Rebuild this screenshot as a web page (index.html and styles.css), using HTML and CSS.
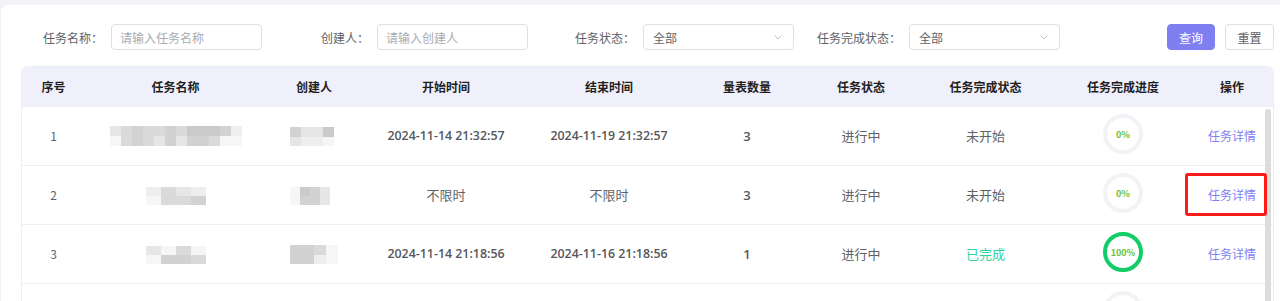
FILE: index.html
```html
<!DOCTYPE html>
<html lang="zh-CN">
<head>
<meta charset="utf-8">
<title>任务列表</title>
<link rel="stylesheet" href="styles.css">
</head>
<body>
<div class="page">
  <div class="card">
    <form class="filters">
      <div class="fitem first">
        <label class="flabel">任务名称：</label>
        <div class="finput"><span class="ph">请输入任务名称</span></div>
      </div>
      <div class="fitem">
        <label class="flabel">创建人：</label>
        <div class="finput"><span class="ph">请输入创建人</span></div>
      </div>
      <div class="fitem">
        <label class="flabel">任务状态：</label>
        <div class="finput select"><span class="val">全部</span>
          <svg class="chev" viewBox="0 0 8 5" width="8" height="5"><path d="M0.5 0.5 L4 4 L7.5 0.5" fill="none" stroke="#c0c4cc" stroke-width="1"/></svg>
        </div>
      </div>
      <div class="fitem">
        <label class="flabel">任务完成状态：</label>
        <div class="finput select"><span class="val">全部</span>
          <svg class="chev" viewBox="0 0 8 5" width="8" height="5"><path d="M0.5 0.5 L4 4 L7.5 0.5" fill="none" stroke="#c0c4cc" stroke-width="1"/></svg>
        </div>
      </div>
      <div class="btns">
        <button type="button" class="btn primary">查询</button>
        <button type="button" class="btn">重置</button>
      </div>
    </form>

    <div class="table-wrap">
      <table class="tbl">
        <colgroup>
          <col class="c1"><col class="c2"><col class="c3"><col class="c4"><col class="c5">
          <col class="c6"><col class="c7"><col class="c8"><col class="c9"><col class="c10">
        </colgroup>
        <thead>
          <tr>
            <th>序号</th><th>任务名称</th><th>创建人</th><th>开始时间</th><th>结束时间</th>
            <th>量表数量</th><th>任务状态</th><th>任务完成状态</th><th>任务完成进度</th><th>操作</th>
          </tr>
        </thead>
        <tbody>
          <tr>
            <td class="idx">1</td>
            <td><div class="mosaic m-name1"><i class="a"></i><i class="b"></i><i class="c"></i><i class="b"></i><i class="b"></i><i class="c"></i><i class="b"></i><i class="d"></i><i class="d"></i><i class="d"></i><i class="c"></i><i class="e"></i><i class="f"></i><i class="b"></i><i class="c"></i><i class="b"></i><i class="a"></i><i class="c"></i><i class="a"></i><i class="c"></i><i class="c"></i><i class="b"></i><i class="f"></i><i class="f"></i></div></td>
            <td><div class="mosaic m-user"><i class="c"></i><i class="a"></i><i class="a"></i><i class="d"></i><i class="a"></i><i class="e"></i><i class="e"></i><i class="f"></i></div></td>
            <td class="date">2024-11-14 21:32:57</td>
            <td class="date">2024-11-19 21:32:57</td>
            <td class="num">3</td>
            <td>进行中</td>
            <td>未开始</td>
            <td><div class="ring"><svg viewBox="0 0 40 40" width="40" height="40"><circle cx="20" cy="20" r="18" fill="none" stroke="#f2f3f7" stroke-width="4"/></svg><span class="pct">0%</span></div></td>
            <td><a class="link">任务详情</a></td>
          </tr>
          <tr>
            <td class="idx">2</td>
            <td><div class="mosaic m-name2"><i class="e"></i><i class="b"></i><i class="a"></i><i class="e"></i><i class="f"></i><i class="b"></i><i class="b"></i><i class="c"></i></div></td>
            <td><div class="mosaic m-user2"><i class="f"></i><i class="d"></i><i class="c"></i><i class="a"></i><i class="f"></i><i class="c"></i><i class="c"></i><i class="a"></i></div></td>
            <td>不限时</td>
            <td>不限时</td>
            <td class="num">3</td>
            <td>进行中</td>
            <td>未开始</td>
            <td><div class="ring"><svg viewBox="0 0 40 40" width="40" height="40"><circle cx="20" cy="20" r="18" fill="none" stroke="#f2f3f7" stroke-width="4"/></svg><span class="pct">0%</span></div></td>
            <td><a class="link">任务详情</a></td>
          </tr>
          <tr>
            <td class="idx">3</td>
            <td><div class="mosaic m-name2"><i class="a"></i><i class="f"></i><i class="b"></i><i class="f"></i><i class="f"></i><i class="c"></i><i class="c"></i><i class="b"></i></div></td>
            <td><div class="mosaic m-user3"><i class="c"></i><i class="c"></i><i class="b"></i><i class="f"></i><i class="c"></i><i class="c"></i><i class="e"></i><i class="f"></i></div></td>
            <td class="date">2024-11-14 21:18:56</td>
            <td class="date">2024-11-16 21:18:56</td>
            <td class="num">1</td>
            <td>进行中</td>
            <td class="done">已完成</td>
            <td><div class="ring"><svg viewBox="0 0 40 40" width="40" height="40"><circle cx="20" cy="20" r="18" fill="none" stroke="#13ce66" stroke-width="4"/></svg><span class="pct">100%</span></div></td>
            <td><a class="link">任务详情</a></td>
          </tr>
          <tr>
            <td></td><td></td><td></td><td></td><td></td><td></td><td></td><td></td>
            <td><div class="ring"><svg viewBox="0 0 40 40" width="40" height="40"><circle cx="20" cy="20" r="18" fill="none" stroke="#f2f3f7" stroke-width="4"/></svg></div></td>
            <td></td>
          </tr>
        </tbody>
      </table>
      <div class="scroll-thumb"></div>
      <div class="highlight"></div>
    </div>
  </div>
</div>
</body>
</html>
```

FILE: styles.css
```css
* { box-sizing: border-box; }

html, body {
  margin: 0;
  height: 301px;
  overflow: hidden;
}

body {
  background: #f2f3f7;
  font-family: "Noto Sans CJK SC", "Noto Sans", sans-serif;
  color: #606266;
}

.page {
  padding: 5px 0 0 1px;
}

.card {
  background: #fff;
  border-radius: 6px 0 0 0;
  padding: 19px 6px 0 20px;
  height: 296px;
}

/* filters */
.filters {
  display: flex;
  align-items: center;
  height: 26px;
  margin: 0;
}

.fitem {
  display: flex;
  align-items: center;
  justify-content: flex-end;
  width: 266px;
  flex: none;
}

.fitem.first {
  width: 241px;
}

.flabel {
  font-size: 12px;
  color: #606266;
  padding-right: 8px;
  white-space: nowrap;
}

.finput {
  width: 151px;
  height: 26px;
  border: 1px solid #dcdfe6;
  border-radius: 4px;
  display: flex;
  align-items: center;
  padding: 0 8px;
  font-size: 12px;
  flex: none;
}

.finput .ph {
  color: #a8abb2;
}

.finput.select {
  justify-content: space-between;
  padding: 0 11px 0 9px;
}

.finput .val {
  color: #606266;
}

.chev {
  display: block;
}

.btns {
  margin-left: auto;
  display: flex;
  gap: 10px;
}

.btn {
  height: 26px;
  width: 49px;
  border: 1px solid #dcdfe6;
  border-radius: 4px;
  background: #fff;
  color: #606266;
  font-family: inherit;
  font-size: 12px;
  padding: 0;
}

.btn.primary {
  width: 48px;
  background: #7f7ff2;
  border-color: #7f7ff2;
  color: #fff;
}

/* table */
.table-wrap {
  position: relative;
  margin-top: 16px;
  border: 1px solid #ebeef5;
  border-radius: 6px 6px 0 0;
  overflow: hidden;
}

.tbl {
  width: 100%;
  border-collapse: collapse;
  table-layout: fixed;
}

.c1 { width: 63px; }
.c2 { width: 181px; }
.c3 { width: 96px; }
.c4 { width: 168px; }
.c5 { width: 158px; }
.c6 { width: 118px; }
.c7 { width: 110px; }
.c8 { width: 139px; }
.c9 { width: 136px; }
.c10 { width: 82px; }

.tbl th {
  height: 39px;
  background: #f0f0fc;
  color: #1f1f1f;
  font-size: 12px;
  font-weight: 700;
  text-align: center;
  padding: 0;
}

.tbl td {
  height: 59px;
  border-top: 1px solid #ebeef5;
  text-align: center;
  font-size: 13px;
  color: #606266;
  padding: 0;
}

.tbl td.idx {
  font-size: 12px;
}

.tbl td.date {
  font-family: "Open Sans", "Noto Sans", sans-serif;
  font-size: 12.4px;
  font-weight: 600;
  color: #55575b;
}

.tbl td.num {
  font-family: "Open Sans", "Noto Sans", sans-serif;
  font-weight: 600;
  color: #55575b;
}

.tbl td.done {
  color: #2ed3a2;
}

.link {
  color: #7f80f2;
  font-size: 12px;
  cursor: pointer;
}

/* progress ring */
.ring {
  display: inline-grid;
  width: 40px;
  height: 40px;
  vertical-align: middle;
  margin-bottom: 3px;
}

.ring svg,
.ring .pct {
  grid-area: 1 / 1;
}

.ring .pct {
  align-self: center;
  justify-self: center;
  font-size: 9px;
  font-weight: 700;
  color: #67c23a;
  line-height: 1;
}

/* blurred (redacted) content */
.mosaic {
  display: inline-grid;
  grid-auto-flow: row;
  vertical-align: middle;
  filter: blur(0.6px);
}

.mosaic i {
  display: block;
}

.mosaic .a { background: #e6e6e6; }
.mosaic .b { background: #dadada; }
.mosaic .c { background: #d2d2d2; }
.mosaic .d { background: #cacaca; }
.mosaic .e { background: #eeeeee; }
.mosaic .f { background: #f6f6f6; }

.m-name1 {
  grid-template-columns: repeat(12, 11px);
  grid-template-rows: 10px 10px;
}

.m-user {
  grid-template-columns: repeat(4, 11px);
  grid-template-rows: 10px 9px;
  margin-left: -4px;
}

.m-name2 {
  grid-template-columns: repeat(4, 15px);
  grid-template-rows: 9px 9px;
}

.m-user2 {
  grid-template-columns: repeat(4, 10px);
  grid-template-rows: 9px 9px;
  margin-left: -8px;
}

.m-user3 {
  grid-template-columns: repeat(4, 12px);
  grid-template-rows: 10px 9px;
}

/* overlays */
.scroll-thumb {
  position: absolute;
  right: 2px;
  top: 42px;
  width: 6px;
  height: 400px;
  background: #dcdcdc;
  border-radius: 3px;
}

.highlight {
  position: absolute;
  left: 1163px;
  top: 106px;
  width: 82px;
  height: 43px;
  border: 3px solid #ff1a1a;
  border-radius: 3px;
}
```
